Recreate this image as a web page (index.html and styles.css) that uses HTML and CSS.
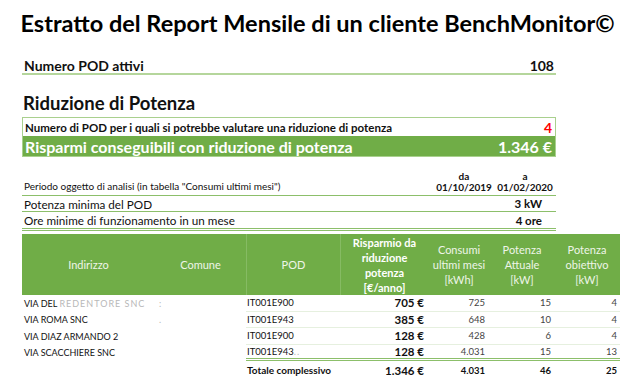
FILE: index.html
```html
<!DOCTYPE html>
<html lang="it">
<head>
<meta charset="utf-8">
<link rel="stylesheet" href="styles.css">
</head>
<body>
<h1 class="title">Estratto del Report Mensile di un cliente BenchMonitor©</h1>

<div class="kpi">
  <span>Numero POD attivi</span>
  <span>108</span>
</div>

<h2 class="section">Riduzione di Potenza</h2>

<div class="box">
  <div class="box-row">
    <span>Numero di POD per i quali si potrebbe valutare una riduzione di potenza</span>
    <span class="red">4</span>
  </div>
  <div class="box-green">
    <span>Risparmi conseguibili con riduzione di potenza</span>
    <span>1.346 €</span>
  </div>
</div>

<div class="period">
  <span class="period-label">Periodo oggetto di analisi (in tabella "Consumi ultimi mesi")</span>
  <div class="date"><span>da</span><span>01/10/2019</span></div>
  <div class="date"><span>a</span><span>01/02/2020</span></div>
</div>
<div class="param first"><span>Potenza minima del POD</span><b>3 kW</b></div>
<div class="param last"><span>Ore minime di funzionamento in un mese</span><b>4 ore</b></div>

<div class="table">
  <div class="thead">
    <div class="c1">Indirizzo</div>
    <div class="c2">Comune</div>
    <div class="c3">POD</div>
    <div class="c4 strong">Risparmio da riduzione potenza [€/anno]</div>
    <div class="c5">Consumi ultimi mesi [kWh]</div>
    <div class="c6">Potenza Attuale [kW]</div>
    <div class="c7">Potenza obiettivo [kW]</div>
  </div>
  <div class="tr">
    <div class="c1">VIA DEL <span class="blur">REDENTORE SNC</span></div>
    <div class="c2"><span class="blur">:</span></div>
    <div class="c3 pod">IT001E900</div>
    <div class="c4 strong">705 €</div>
    <div class="c5">725</div>
    <div class="c6">15</div>
    <div class="c7">4</div>
  </div>
  <div class="tr">
    <div class="c1">VIA ROMA SNC</div>
    <div class="c2"><span class="blur">.</span></div>
    <div class="c3 pod">IT001E943</div>
    <div class="c4 strong">385 €</div>
    <div class="c5">648</div>
    <div class="c6">10</div>
    <div class="c7">4</div>
  </div>
  <div class="tr">
    <div class="c1">VIA DIAZ ARMANDO 2</div>
    <div class="c2"></div>
    <div class="c3 pod">IT001E900</div>
    <div class="c4 strong">128 €</div>
    <div class="c5">428</div>
    <div class="c6">6</div>
    <div class="c7">4</div>
  </div>
  <div class="tr lastrow">
    <div class="c1">VIA SCACCHIERE SNC</div>
    <div class="c2"></div>
    <div class="c3 pod">IT001E943<span class="blur">..</span></div>
    <div class="c4 strong">128 €</div>
    <div class="c5">4.031</div>
    <div class="c6">15</div>
    <div class="c7">13</div>
  </div>
  <div class="tr total">
    <div class="c1"></div>
    <div class="c2"></div>
    <div class="c3">Totale complessivo</div>
    <div class="c4">1.346 €</div>
    <div class="c5">4.031</div>
    <div class="c6">46</div>
    <div class="c7">25</div>
  </div>
</div>
</body>
</html>
```

FILE: styles.css
```css
* { box-sizing: border-box; }
body {
  margin: 0;
  background: #fff;
  font-family: Lato, "Open Sans", sans-serif;
  color: #111;
}
.title {
  margin: 9px 0 0;
  text-align: center;
  font-size: 23.5px;
  line-height: 28px;
  font-weight: 700;
  color: #000;
}
.kpi {
  margin: 21px 0 0 22px;
  width: 534px;
  display: flex;
  justify-content: space-between;
  font-size: 14px;
  font-weight: 700;
  line-height: 15px;
  padding: 0 2px;
  border-bottom: 2px solid #b5d69c;
}
.section {
  margin: 17px 0 0 23px;
  font-size: 18.5px;
  font-weight: 700;
  line-height: 22px;
  color: #111;
}
.box {
  margin: 3px 0 0 22px;
  width: 534px;
  border: 1px solid #a9d08e;
}
.box-row {
  display: flex;
  justify-content: space-between;
  align-items: center;
  height: 18px;
  padding: 0 3px 0 2px;
  font-size: 11.5px;
  font-weight: 700;
}
.box-row .red { color: #f00; font-size: 14px; }
.box-green {
  display: flex;
  justify-content: space-between;
  align-items: center;
  height: 20px;
  padding: 0 3px 0 2px;
  background: #70ad47;
  color: #fff;
  font-size: 16px;
  font-weight: 700;
}
.period {
  margin: 14px 0 0 22px;
  width: 534px;
  display: flex;
  align-items: flex-end;
  font-size: 10px;
  line-height: 11px;
  padding: 0 2px 2px;
  border-bottom: 1px solid #8cbf6a;
}
.period-label { flex: 1; padding-bottom: 1px; }
.date {
  display: flex;
  flex-direction: column;
  align-items: center;
  font-weight: 700;
  width: 58px;
  margin-left: 3px;
}
.param {
  margin-left: 22px;
  width: 534px;
  display: flex;
  justify-content: space-between;
  height: 16px;
  align-items: center;
  font-size: 11.7px;
  padding: 0 14px 0 2px;
  border-bottom: 1px solid #8cbf6a;
}
.param b { font-size: 11.5px; }
.param.last { border-bottom: 3px double #8cbf6a; height: 19px; }
.table {
  margin: 3px 0 0 22px;
  width: 598px;
  font-size: 9px;
}
.thead {
  display: flex;
  background: #70ad47;
  color: #eef5e8;
  height: 61px;
  font-size: 11px;
  line-height: 15px;
}
.thead > div {
  display: flex;
  align-items: center;
  justify-content: center;
  text-align: center;
  padding: 0 4px;
}
.thead .c3, .thead .c4 { border-left: 1px solid #86bb63; }
.thead .strong { color: #fff; font-weight: 700; }
.c1 { width: 133px; }
.c2 { width: 91px; }
.c3 { width: 94px; }
.c4 { width: 88px; }
.c5 { width: 62px; }
.c6 { width: 64px; }
.c7 { width: 66px; }
.tr {
  display: flex;
  height: 16.5px;
  align-items: center;
}
.tr > div { padding: 0 2px; white-space: nowrap; }
.tr .c1 { padding-left: 2px; }
.tr .c3 {
  align-self: stretch;
  display: flex;
  align-items: center;
  padding-left: 1px;
  font-size: 9.5px;
  border-bottom: 1px solid #e6f0df;
}
.tr .c4, .tr .c5, .tr .c6, .tr .c7 {
  text-align: right;
  align-self: stretch;
  display: flex;
  align-items: center;
  justify-content: flex-end;
  border-bottom: 1px solid #e6f0df;
  font-size: 9.5px;
}
.tr .c4 { font-size: 11.5px; font-weight: 700; padding-right: 4px; }
.tr .c5 { padding-right: 5px; color: #444; }
.tr .c6 { padding-right: 3px; color: #444; }
.tr .c7 { padding-right: 3px; color: #444; }
.tr .c2 { padding-left: 4px; }
.blur { color: #b8b8b8; letter-spacing: 1px; }
.tr.lastrow > div.c3,
.tr.lastrow > div.c4,
.tr.lastrow > div.c5,
.tr.lastrow > div.c6,
.tr.lastrow > div.c7 { border-bottom: 3px double #8cbf6a; }
.tr.total { height: 18px; font-weight: 700; }
.tr.total > div { border-bottom: none; color: #111; }
.tr.total .c3 { padding-left: 1px; font-size: 10px; }
.tr.total .c4 { font-size: 11.5px; }
```
